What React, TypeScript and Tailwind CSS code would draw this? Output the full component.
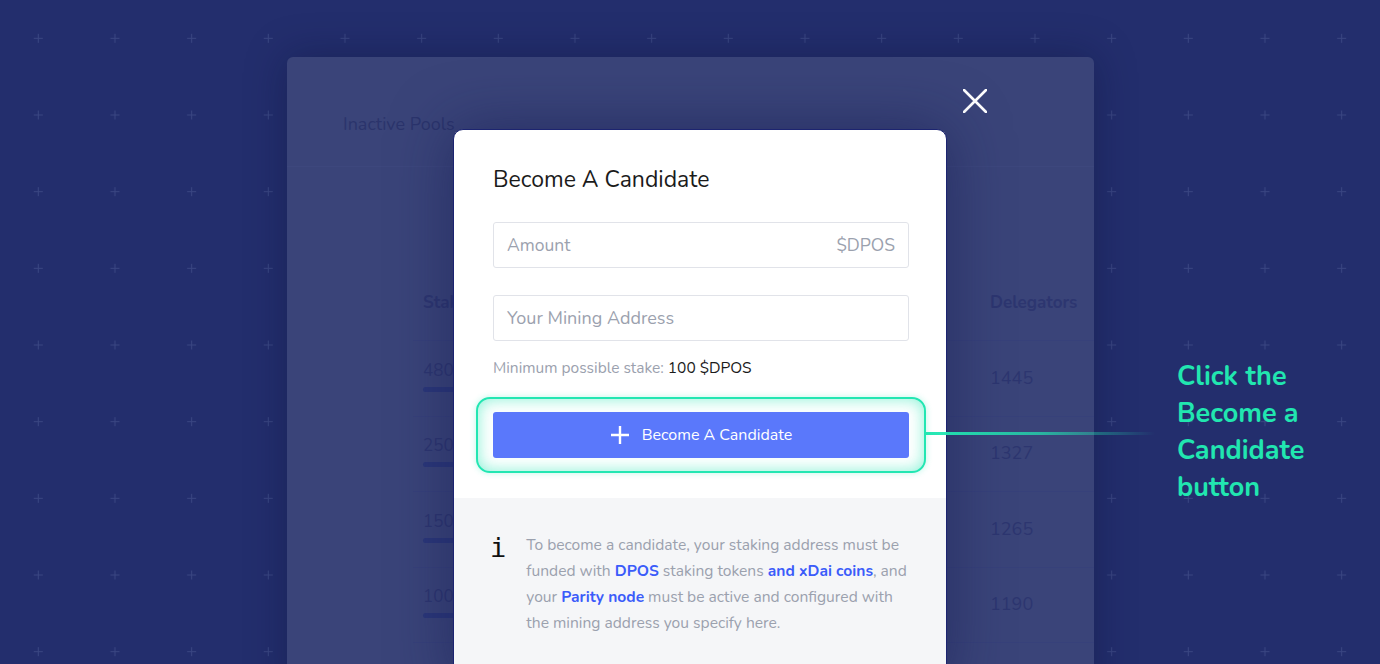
import React from 'react';

const font = { fontFamily: 'Nunito, Lato, "Open Sans", sans-serif' };

const CrossPattern: React.FC = () => (
  <svg className="absolute inset-0 pointer-events-none" width="1380" height="664">
    <defs>
      <pattern id="cross" x="0" y="0" width="76.667" height="76.667" patternUnits="userSpaceOnUse">
        <path d="M38.3 33.8v9M33.8 38.3h9" stroke="#3a4682" strokeWidth="1" fill="none" />
      </pattern>
    </defs>
    <rect width="1380" height="664" fill="url(#cross)" />
  </svg>
);

const rows = [
  { stake: '4800', delegators: '1445' },
  { stake: '2500', delegators: '1327' },
  { stake: '1500', delegators: '1265' },
  { stake: '1000', delegators: '1190' },
];

export default function App() {
  return (
    <div
      className="relative w-[1380px] h-[664px] overflow-hidden bg-[#232e6d]"
      style={font}
    >
      <CrossPattern />

      {/* dimmed pools panel behind the modal */}
      <div className="relative flex pt-[57px] pl-[287px]">
        <div className="flex flex-col w-[807px] h-[640px] rounded-t-[6px] bg-[#3a4479] shadow-[0_0_40px_rgba(10,15,50,0.35)]">
          <div className="flex h-[110px] pl-[56px] pt-[55px] border-b border-[#3d477d]">
            <span className="text-[18px] leading-[24px] text-[#2b346c]">Inactive Pools</span>
          </div>
          <div className="flex flex-col pl-[126px] pt-[99px]">
            <div className="flex items-center h-[75px] border-b border-[#37417a]">
              <span className="w-[577px] pl-[10px] text-[17px] font-bold text-[#2d3670]">Stake</span>
              <span className="text-[17px] font-bold text-[#2d3670]">Delegators</span>
            </div>
            {rows.map((r) => (
              <div key={r.stake} className="flex items-center h-[75.5px] border-b border-[#37417a]">
                <div className="w-[577px] pl-[10px] flex flex-col gap-[6px] -mt-[4px]">
                  <span className="text-[17px] leading-[20px] text-[#2d3670]">{r.stake}</span>
                  <div className="w-[120px] h-[5px] rounded-full bg-[#2b3779]" />
                </div>
                <span className="text-[18px] text-[#2d3670]">{r.delegators}</span>
              </div>
            ))}
          </div>
        </div>
      </div>

      {/* close icon */}
      <svg className="absolute left-[963px] top-[89px]" width="24" height="24" viewBox="0 0 24 24">
        <path d="M1 1L23 23M23 1L1 23" stroke="#ffffff" strokeWidth="2.6" strokeLinecap="round" />
      </svg>

      {/* modal */}
      <div className="absolute left-[453px] top-[129px] w-[494px] h-[560px] rounded-[10px] overflow-hidden bg-white shadow-[0_0_60px_rgba(20,25,80,0.55)] border border-[#1c2470]">
        <div className="flex flex-col pl-[39px] pr-[37px] pt-[35px] pb-[40px]">
          <h2 className="text-[23px] leading-[29px] text-[#1b1b1b]">Become A Candidate</h2>
          <div className="mt-[28px] flex items-center justify-between h-[46px] px-[13px] border border-[#e1e3e9] rounded-[3px]">
            <span className="text-[17.5px] text-[#9ba1ae]">Amount</span>
            <span className="text-[17.5px] text-[#9ba1ae]">$DPOS</span>
          </div>
          <div className="mt-[27px] flex items-center h-[46px] px-[13px] border border-[#e1e3e9] rounded-[3px]">
            <span className="text-[18px] text-[#9ba1ae]">Your Mining Address</span>
          </div>
          <p className="mt-[17px] text-[15.5px] leading-[20px] text-[#9ba1ae]">
            Minimum possible stake: <span className="text-[#1b1b1b]">100 $DPOS</span>
          </p>
          <div className="relative mt-[34px]">
            <div className="absolute -inset-x-[17px] -inset-y-[15px] rounded-[14px] border-2 border-[#22e6b2] bg-white shadow-[inset_0_0_16px_rgba(34,230,178,0.55),0_0_6px_rgba(34,230,178,0.3)]" />
            <button className="relative flex items-center justify-center gap-[12px] w-full h-[46px] rounded-[3px] bg-[#5a78fb] text-white text-[16px]">
              <svg width="20" height="20" viewBox="0 0 20 20">
                <path d="M10 1v18M1 10h18" stroke="#ffffff" strokeWidth="2.4" />
              </svg>
              <span>Become A Candidate</span>
            </button>
          </div>
        </div>
        <div className="flex gap-[20px] bg-[#f5f6f8] pl-[36px] pr-[38px] pt-[34px] pb-[40px]">
          <span
            className="text-[27px] leading-[30px] text-[#111] mt-[1px]"
            style={{ fontFamily: '"DejaVu Sans Mono", monospace' }}
          >
            i
          </span>
          <p className="text-[15.6px] leading-[26px] text-[#9ba1ae]">
            To become a candidate, your staking address must be funded with{' '}
            <span className="font-bold text-[#3b5cfa]">DPOS</span> staking tokens{' '}
            <span className="font-bold text-[#3b5cfa]">and xDai coins</span>, and your{' '}
            <span className="font-bold text-[#3b5cfa]">Parity node</span> must be active and configured with the mining
            address you specify here.
          </p>
        </div>
      </div>

      {/* connector line */}
      <div className="absolute left-[925px] top-[432px] w-[230px] h-[3px] bg-gradient-to-r from-[#22e6b2] via-[#22e6b2]/70 to-transparent" />

      {/* callout */}
      <p className="absolute left-[1177px] top-[358px] text-[27px] leading-[37px] font-bold text-[#21e6b0]">
        Click the
        <br />
        Become a
        <br />
        Candidate
        <br />
        button
      </p>
    </div>
  );
}
